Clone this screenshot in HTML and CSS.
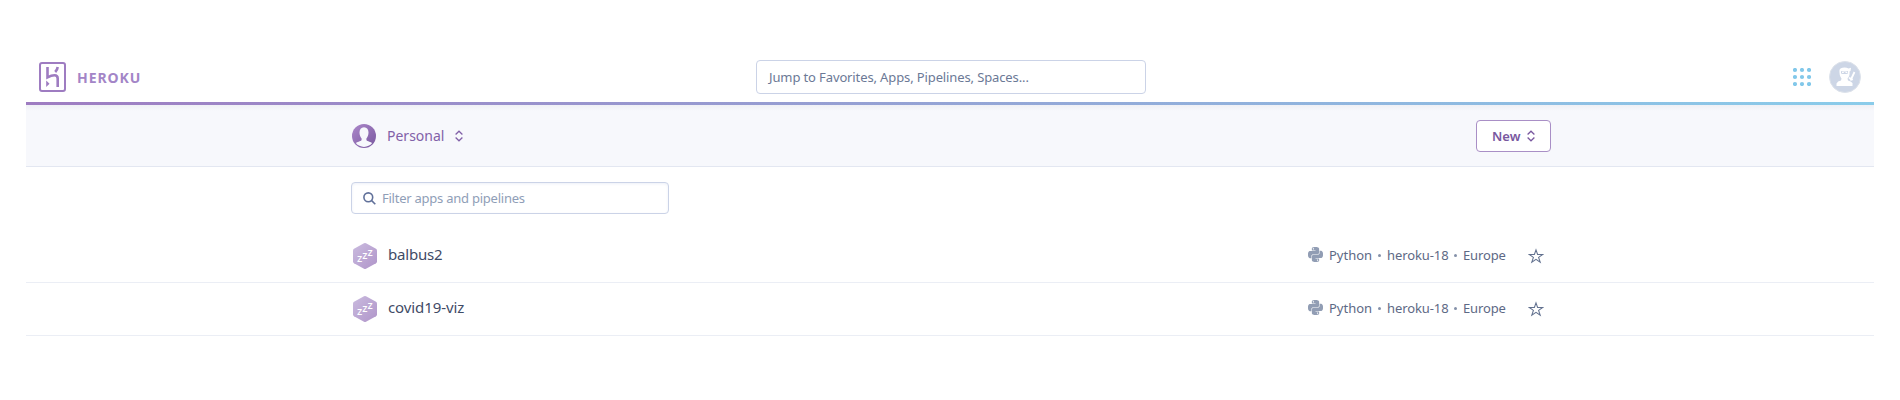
FILE: index.html
```html
<!DOCTYPE html>
<html lang="en">
<head>
<meta charset="utf-8">
<title>Personal apps | Heroku</title>
<link rel="stylesheet" href="styles.css">
</head>
<body>
<svg class="defs" width="0" height="0" aria-hidden="true">
  <defs>
    <linearGradient id="hexFill" x1="0" y1="0" x2="1" y2="1"><stop offset="0" stop-color="#cabbdf"/><stop offset="1" stop-color="#b095c9"/></linearGradient>
    <linearGradient id="userFill" x1="0" y1="0" x2="1" y2="1"><stop offset="0" stop-color="#ac88ca"/><stop offset="1" stop-color="#79589f"/></linearGradient>
    <symbol id="caret" viewBox="0 0 8 12"><path d="M.6 4.500 4 1.200l3.400 3.300M.6 7.500 4 10.800l3.400-3.300" fill="none" stroke="currentColor" stroke-width="1.25"/></symbol>
    <symbol id="sleep" viewBox="0 0 24 26">
      <path d="M11 .3q1-.5 2 0l10 5.500q1 .6 1 1.700v11q0 1.100-1 1.700l-10 5.500q-1 .5-2 0l-10-5.500q-1-.6-1-1.700v-11q0-1.100 1-1.700z" fill="url(#hexFill)"/>
      <text class="zed" x="4" y="19.300">z</text><text class="zed" x="9.200" y="16.300">z</text><text class="zed" x="14.400" y="13.300">z</text>
    </symbol>
    <symbol id="python" viewBox="0 0 24 24"><path fill="currentColor" d="M14.25.18l.9.2.73.26.59.3.45.32.34.34.25.34.16.33.1.3.04.26.02.2-.01.13V8.5l-.05.63-.13.55-.21.46-.26.38-.3.31-.33.25-.35.19-.35.14-.33.1-.3.07-.26.04-.21.02H8.77l-.69.05-.59.14-.5.22-.41.27-.33.32-.27.35-.2.36-.15.37-.1.35-.07.32-.04.27-.02.21v3.06H3.17l-.21-.03-.28-.07-.32-.12-.35-.18-.36-.26-.36-.36-.35-.46-.32-.59-.28-.73-.21-.88-.14-1.05-.05-1.23.06-1.22.16-1.04.24-.87.32-.71.36-.57.4-.44.42-.33.42-.24.4-.16.36-.1.32-.05.24-.01h.16l.06.01h8.16v-.83H6.18l-.01-2.75-.02-.37.05-.34.11-.31.17-.28.25-.26.31-.23.38-.2.44-.18.51-.15.58-.12.64-.1.71-.06.77-.04.84-.02 1.27.05zm-6.3 1.98l-.23.33-.08.41.08.41.23.34.33.22.41.09.41-.09.33-.22.23-.34.08-.41-.08-.41-.23-.33-.33-.22-.41-.09-.41.09zm13.09 3.95l.28.06.32.12.35.18.36.27.36.35.35.47.32.59.28.73.21.88.14 1.04.05 1.23-.06 1.23-.16 1.04-.24.86-.32.71-.36.57-.4.45-.42.33-.42.24-.4.16-.36.09-.32.05-.24.02-.16-.01h-8.22v.82h5.84l.01 2.76.02.36-.05.34-.11.31-.17.29-.25.25-.31.24-.38.2-.44.17-.51.15-.58.13-.64.09-.71.07-.77.04-.84.01-1.27-.04-1.07-.14-.9-.2-.73-.25-.59-.3-.45-.33-.34-.34-.25-.34-.16-.33-.1-.3-.04-.25-.02-.2.01-.13v-5.34l.05-.64.13-.54.21-.46.26-.38.3-.32.33-.24.35-.2.35-.14.33-.1.3-.06.26-.04.21-.02.13-.01h5.84l.69-.05.59-.14.5-.21.41-.28.33-.32.27-.35.2-.36.15-.36.1-.35.07-.32.04-.28.02-.21V6.07h2.09l.14.01zm-6.47 14.25l-.23.33-.08.41.08.41.23.33.33.23.41.08.41-.08.33-.23.23-.33.08-.41-.08-.41-.23-.33-.33-.23-.41-.08-.41.08z"/></symbol>
    <symbol id="star" viewBox="0 0 16 16"><path d="M8 1.800 9.600 6.500H14.700L10.600 9.400 12.200 14.200 8 11.300 3.800 14.200 5.400 9.400 1.300 6.500H6.400z" fill="none" stroke="currentColor" stroke-width="1.05"/></symbol>
  </defs>
</svg>
<div class="app">
  <header class="topbar">
    <a class="brand">
      <svg class="logo" width="27" height="30" viewBox="0 0 27 30"><rect x="1" y="1" width="25" height="28" rx="2" fill="none" stroke="#9e7cc1" stroke-width="2"/><path d="M8.500 5v10.300q4-2 7-2 3.200 0 3.200 3.200V25M18.700 5q-.3 2.700-2.500 5" fill="none" stroke="#9e7cc1" stroke-width="2.600"/><path d="M7.200 18.500 10.500 21.700 7.200 25z" fill="#9e7cc1"/></svg>
      <span class="wordmark">HEROKU</span>
    </a>
    <div class="jump"><span class="jump-text">Jump to Favorites, Apps, Pipelines, Spaces...</span></div>
    <div class="tools">
      <svg width="18" height="18" viewBox="0 0 18 18" fill="#82c8ea"><circle cx="2" cy="2" r="2.100"/><circle cx="9" cy="2" r="2.100"/><circle cx="16" cy="2" r="2.100"/><circle cx="2" cy="9" r="2.100"/><circle cx="9" cy="9" r="2.100"/><circle cx="16" cy="9" r="2.100"/><circle cx="2" cy="16" r="2.100"/><circle cx="9" cy="16" r="2.100"/><circle cx="16" cy="16" r="2.100"/></svg>
      <svg width="32" height="32" viewBox="0 0 32 32"><circle cx="16" cy="16" r="15.500" fill="#cdd6e6" stroke="#dde2ea"/><path d="M10.500 9Q11 6.500 15.500 6.500 18 6.500 19.500 7.500L22 6.800 21.500 10 20.500 10.500Q21 15 18.500 17.500L19 19.500Q22 20 23.500 22V25H7.500V22.500Q8.500 19.800 12 19.500L12.500 17.500Q10 14 10.500 9z" fill="#fff"/><path d="M12 10q3.500 1 7 0v2.600q-3.500 1-7 0z" fill="#cdd6e6"/><path d="M13 11.500h1.800M16.500 11.500h1.800" stroke="#fff" stroke-width="1"/><path d="M25.500 11 21.500 19.500M20 16.800l3.800 2" stroke="#fff" stroke-width="1.800"/></svg>
    </div>
  </header>
  <div class="rule"></div>
  <section class="subnav">
    <div class="content subnav-inner">
      <div class="account">
        <svg width="24" height="24" viewBox="0 0 24 24"><circle cx="12" cy="12" r="12" fill="url(#userFill)"/><path d="M12 3.300c3 0 4.500 2.200 4.500 5.300 0 2.300-.8 4.500-2.100 5.900v1.200c0 1.500 3.400 1.600 5.800 3.300A10.600 10.600 0 0 1 3.800 19c2.400-1.700 5.800-1.800 5.800-3.300v-1.200C8.300 13.100 7.500 10.900 7.500 8.600c0-3.100 1.500-5.300 4.500-5.300z" fill="#f7f8fc"/></svg>
        <span class="account-name">Personal</span>
        <svg class="caret" width="8" height="12"><use href="#caret"/></svg>
      </div>
      <div class="new"><span class="new-text">New</span><svg class="caret" width="8" height="12"><use href="#caret"/></svg></div>
    </div>
  </section>
  <main>
    <div class="content filter-wrap">
      <div class="filter">
        <svg width="13" height="13" viewBox="0 0 13 13" fill="none" stroke="#61719a" stroke-width="1.600"><circle cx="5.300" cy="5.300" r="4.400"/><path d="m8.400 8.400 3.900 3.900"/></svg>
        <span class="filter-text">Filter apps and pipelines</span>
      </div>
    </div>
    <div class="row">
      <div class="content row-inner">
        <svg class="hex" width="24" height="26"><use href="#sleep"/></svg>
        <span class="name balbus">balbus2</span>
        <svg class="py" width="15" height="15"><use href="#python"/></svg>
        <div class="meta"><span class="lang">Python</span><i></i><span class="stack">heroku-18</span><i></i><span class="region">Europe</span></div>
        <svg class="star" width="16" height="16"><use href="#star"/></svg>
      </div>
    </div>
    <div class="row">
      <div class="content row-inner">
        <svg class="hex" width="24" height="26"><use href="#sleep"/></svg>
        <span class="name covid">covid19-viz</span>
        <svg class="py" width="15" height="15"><use href="#python"/></svg>
        <div class="meta"><span class="lang">Python</span><i></i><span class="stack">heroku-18</span><i></i><span class="region">Europe</span></div>
        <svg class="star" width="16" height="16"><use href="#star"/></svg>
      </div>
    </div>
  </main>
</div>
</body>
</html>
```
FILE: styles.css
```css
* { box-sizing: border-box; }
body { margin: 0; height: 400px; overflow: hidden; background: #fff; font-family: "Noto Sans", "Open Sans", sans-serif; }
svg { display: block; flex: none; }
.defs { position: absolute; }
.app { width: 1848px; margin: 0 26px; padding-top: 52px; }
.topbar { height: 50px; display: grid; grid-template-columns: 730px 390px 1fr; align-items: center; padding: 0 13px 0 0; }
.brand { display: flex; align-items: center; gap: 11px; padding-left: 13px; }
.wordmark { font: 700 14px/20px "Noto Sans", sans-serif; letter-spacing: .95px; color: #a385c7; padding-top: 1px; }
.jump { height: 34px; border: 1px solid #cbd3e7; border-radius: 4px; padding: 0 12px; line-height: 32px; font-size: 13px; letter-spacing: -.12px; color: #6b7996; white-space: nowrap; }
.tools { display: flex; justify-content: flex-end; align-items: center; gap: 18px; }
.rule { height: 3px; background: linear-gradient(90deg, #9e7cc1, #8accea); }
.subnav { height: 62px; border-bottom: 1px solid #e3e7f1; background: linear-gradient(#eff0f5, #f7f8fc 6px); }
.content { width: 1200px; margin: 0 auto; }
.subnav-inner { height: 61px; display: flex; justify-content: space-between; align-items: center; padding-left: 2px; }
.account { display: flex; align-items: center; color: #8261a8; font-size: 14px; }
.account-name { width: 68px; margin-left: 11px; }
.new { display: flex; align-items: center; width: 75px; height: 32px; margin-right: -1px; padding-left: 15px; border: 1px solid #a98fc6; border-radius: 4px; background: #fff; color: #79589f; font-size: 13px; font-weight: 600; }
.new-text { width: 35px; }
.filter-wrap { padding: 15px 1px 16px; }
.filter { display: flex; align-items: center; gap: 6px; width: 318px; height: 32px; padding-left: 11px; border: 1px solid #cbd3e7; border-radius: 4px; box-shadow: inset 0 1px 3px #edf0f8; color: #8f9eb7; font-size: 13px; letter-spacing: -.24px; }
.row { height: 53px; border-bottom: 1px solid #ebeef5; }
.row-inner { height: 100%; display: flex; align-items: center; padding: 0 6px 0 3px; color: #3f4b66; }
.name { margin: -4px auto 0 11px; font-size: 15px; line-height: 22px; }
.balbus { letter-spacing: -.2px; }
.covid { letter-spacing: -.1px; }
.py { margin: -4px 6px 0 0; color: #919db4; }
.meta { display: flex; align-items: center; width: 199px; margin-top: -2px; font-size: 13px; color: #5d6985; white-space: nowrap; }
.meta i { width: 3px; height: 3px; margin: 1px 6px 0; border-radius: 50%; background: #8491a9; }
.lang { width: 43px; }
.stack { width: 61px; letter-spacing: -.1px; }
.region { letter-spacing: -.15px; }
.star { color: #62718f; margin-top: -1px; }
.zed { font: 500 11px "Noto Sans", sans-serif; fill: #fff; }
```
